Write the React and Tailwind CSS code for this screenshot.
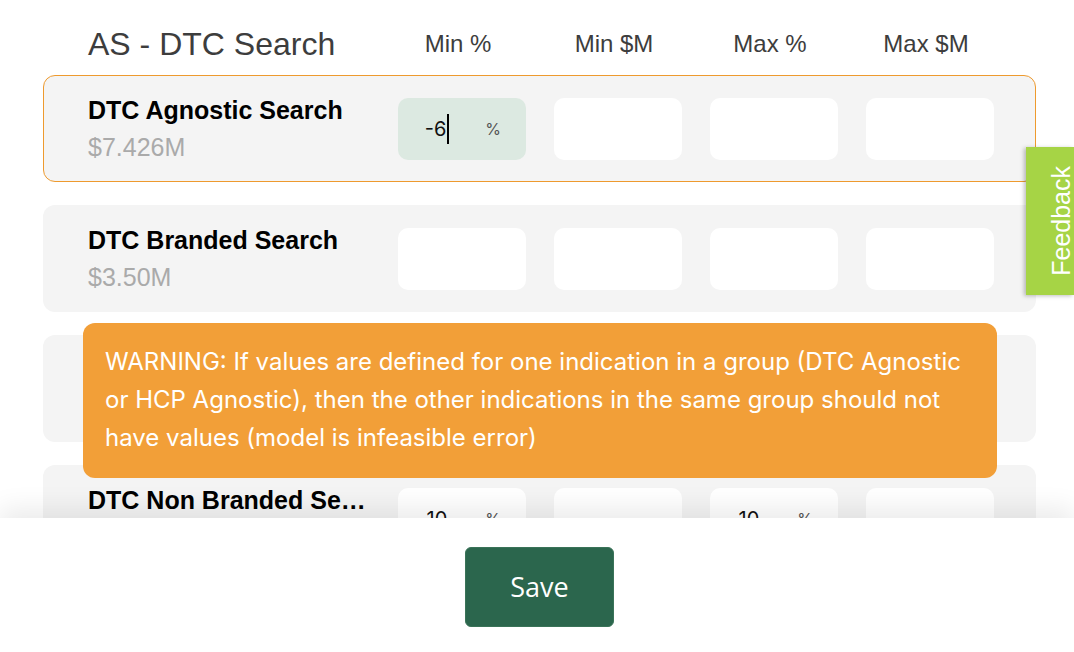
import React from 'react';

// third row sits under the warning toast, so its labels are not shown
const rows = [
  { name: 'DTC Agnostic Search', spend: '$7.426M', active: true, values: ['-6', '', '', ''] },
  { name: 'DTC Branded Search', spend: '$3.50M', values: ['', '', '', ''] },
  { name: '', spend: '', values: ['', '', '', ''] },
  { name: 'DTC Non Branded Search', spend: '$2.10M', values: ['10', '', '10', ''] },
];

const columns = [
  { label: 'Min %', pct: true },
  { label: 'Min $M', pct: false },
  { label: 'Max %', pct: true },
  { label: 'Max $M', pct: false },
];

const grid = 'grid grid-cols-[282px_128px_128px_128px_128px] gap-x-[28px] items-center';

const Field = ({ value, pct, focused }) => (
  <div
    className={`h-[62px] rounded-[10px] flex items-center ${focused ? 'bg-[#dce9e1]' : 'bg-white'}`}
  >
    {value !== '' && (
      <>
        <div className="w-[78px] flex justify-center text-[20px] text-[#111] font-['Inter',sans-serif]">
          <span className={focused ? 'border-r-2 border-black pr-[1px]' : ''}>{value}</span>
        </div>
        {pct && <span className="ml-auto pr-[25px] text-[16px] text-[#555] font-['Inter',sans-serif]">%</span>}
      </>
    )}
  </div>
);

const Row = ({ row }) => (
  <div
    className={`w-[993px] h-[107px] rounded-[12px] bg-[#f4f4f4] ${grid} ${
      row.active ? 'border border-[#ee9a2e] pl-[44px]' : 'pl-[45px]'
    }`}
  >
    <div className="min-w-0">
      {row.name && (
        <>
          <div className="text-[25px] leading-[30px] font-bold text-black truncate">{row.name}</div>
          <div className="text-[25px] leading-[30px] mt-[7px] text-[#aaaaaa]">{row.spend}</div>
        </>
      )}
    </div>
    {row.values.map((v, i) => (
      <Field key={i} value={v} pct={columns[i].pct} focused={row.active && i === 0} />
    ))}
  </div>
);

export default function App() {
  return (
    <div className="relative w-[1074px] h-[652px] overflow-hidden bg-white font-['Liberation_Sans',Arial,sans-serif]">
      <div className="pl-[43px]">
        <div className={`h-[75px] pt-[12px] pl-[45px] ${grid}`}>
          <div className="text-[32px] text-[#3d3d3d]">AS - DTC Search</div>
          {columns.map((c) => (
            <div key={c.label} className="text-[24px] text-[#3d3d3d] text-center -translate-x-[4px]">
              {c.label}
            </div>
          ))}
        </div>
        <div className="flex flex-col gap-[23px]">
          {rows.map((r, i) => (
            <Row key={i} row={r} />
          ))}
        </div>
      </div>

      {/* warning toast */}
      <div className="absolute left-[83px] top-[323px] w-[914px] h-[155px] rounded-[12px] bg-[#f29f38] px-[22px] py-[20px] text-white text-[24px] leading-[38px] font-['Inter',sans-serif]">
        WARNING: If values are defined for one indication in a group (DTC Agnostic or HCP Agnostic), then the other
        indications in the same group should not have values (model is infeasible error)
      </div>

      {/* feedback tab */}
      <div className="absolute right-0 top-[147px] w-[48px] h-[148px] bg-[#a6d445] shadow-[-2px_1px_4px_rgba(0,0,0,0.25)] flex items-center justify-end">
        <span className="[writing-mode:vertical-rl] rotate-180 whitespace-nowrap text-white text-[25px] leading-none">
          Feedback
        </span>
      </div>

      {/* footer */}
      <div className="absolute left-0 right-0 bottom-0 h-[134px] bg-white shadow-[0_-10px_24px_rgba(0,0,0,0.08)] flex justify-center pt-[29px]">
        <button className="w-[149px] h-[80px] ml-[5px] rounded-[6px] bg-[#2b664d] border border-[#3a7358] text-white text-[27px] font-['Open_Sans',sans-serif]">
          Save
        </button>
      </div>
    </div>
  );
}
